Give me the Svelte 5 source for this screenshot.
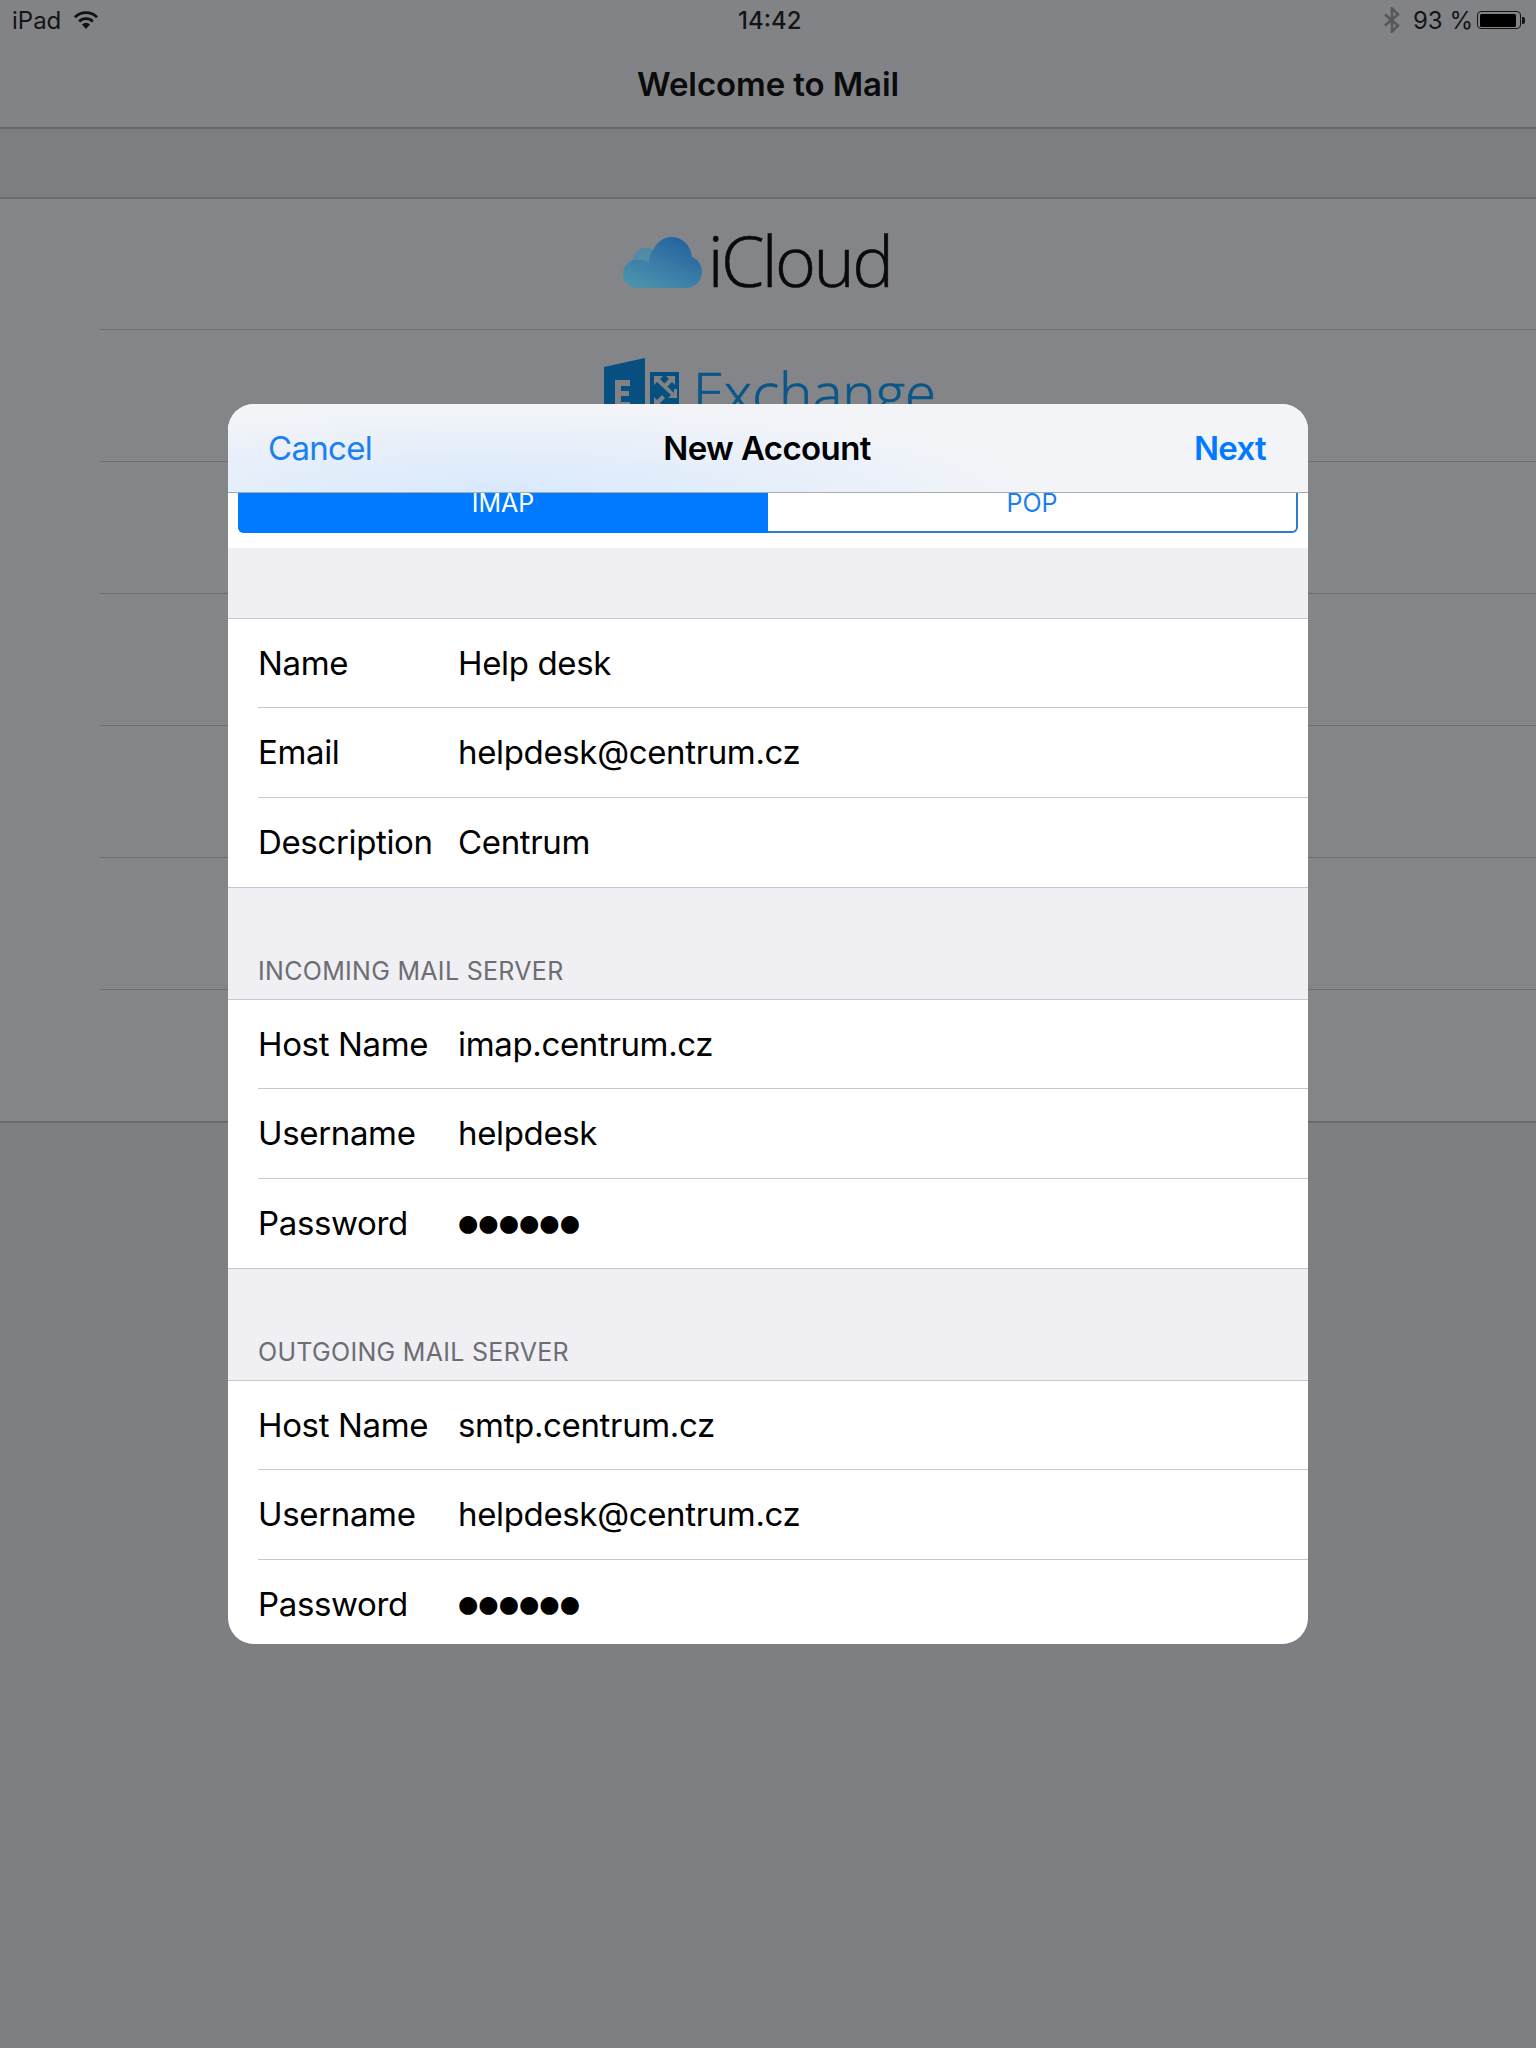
<script>
  const groups = [
    {
      title: "",
      rows: [
        { label: "Name", value: "Help desk" },
        { label: "Email", value: "helpdesk@centrum.cz" },
        { label: "Description", value: "Centrum" }
      ]
    },
    {
      title: "INCOMING MAIL SERVER",
      rows: [
        { label: "Host Name", value: "imap.centrum.cz" },
        { label: "Username", value: "helpdesk" },
        { label: "Password", value: "●●●●●●", secret: true }
      ]
    },
    {
      title: "OUTGOING MAIL SERVER",
      rows: [
        { label: "Host Name", value: "smtp.centrum.cz" },
        { label: "Username", value: "helpdesk@centrum.cz" },
        { label: "Password", value: "●●●●●●", secret: true }
      ]
    }
  ];
</script>

<div class="page">
  <header class="topbar">
    <div class="status">
      <div class="status-left">
        <span>iPad</span>
        <svg class="wifi" viewBox="0 0 24 18" width="24" height="18">
          <path d="M1 6.2a15.6 15.6 0 0 1 22 0" fill="none" stroke="#111" stroke-width="2.8" />
          <path d="M5.2 10.4a9.6 9.6 0 0 1 13.6 0" fill="none" stroke="#111" stroke-width="2.8" />
          <path d="M8 13.4a5.6 5.6 0 0 1 8 0L12 18z" fill="#111" />
        </svg>
      </div>
      <span class="clock">14:42</span>
      <div class="status-right">
        <svg class="bt" viewBox="0 0 16 26" width="16" height="26">
          <path d="M1 7.5 14 18.5 8 24.5V1.5l6 6L1 18.5" fill="none" stroke="#55565a" stroke-width="2.4" />
        </svg>
        <span>93 %</span>
        <div class="battery"><div class="battery-fill"></div></div>
        <div class="battery-tip"></div>
      </div>
    </div>
    <h1>Welcome to Mail</h1>
  </header>

  <div class="band"></div>

  <div class="providers">
    <div class="provider first">
      <svg class="cloud" viewBox="0 0 79 51" width="79" height="51">
        <defs>
          <linearGradient id="cloudfill" x1="0.9" y1="0" x2="0.2" y2="1">
            <stop offset="0" stop-color="#1f5f9c" />
            <stop offset="0.55" stop-color="#3a7ba8" />
            <stop offset="1" stop-color="#4b93ad" />
          </linearGradient>
        </defs>
        <path d="M15 51C6 51 0 45 0 37c0-7 4-12 10-14 1-7 7-13 14-12 2 0 4 1 6 2C34 5 41 0 48 0c11 0 20 8 21 20 6 2 10 8 10 15 0 9-7 16-16 16z" fill="url(#cloudfill)" />
        <path d="M10 23c1-7 7-12 14-12 2 0 4 1 6 2-3 4-4 9-4 13-5-3-11-4-16-3z" fill="#5a93a8" opacity="0.7" />
      </svg>
      <span class="icloud">iCloud</span>
    </div>
    <div class="provider exchange-row">
      <svg class="exchange-logo" viewBox="0 0 75 66" width="75" height="66">
        <path d="M0 9 41 0v66L0 57z" fill="#074f80" />
        <path d="M11 22h15v6H17v5h8v5h-8v6h9v6H11z" fill="#7f8185" />
        <path d="M46 14h29v38H46z" fill="#074f80" />
        <path d="M50 18h9l-3 3 14 14v-4l3 0v9h-9l3-3L53 24l-3 3zM71 18v9l-3-3-7 7-3-3 7-7-3-3zM50 48v-9l3 3 5-5 3 3-5 5 3 3z" fill="#7f8185" />
      </svg>
      <span class="exchange">Exchange</span>
    </div>
    <div class="provider"></div>
    <div class="provider"></div>
    <div class="provider"></div>
    <div class="provider"></div>
    <div class="provider last"></div>
  </div>

  <div class="modal">
    <nav class="modal-nav">
      <span class="cancel">Cancel</span>
      <span class="modal-title">New Account</span>
      <span class="next">Next</span>
    </nav>

    <div class="segment-wrap">
      <div class="segment">
        <div class="seg active">IMAP</div>
        <div class="seg">POP</div>
      </div>
    </div>

    {#each groups as group}
      <div class="group-head">{group.title}</div>
      <div class="group">
        {#each group.rows as row}
          <div class="row">
            <span class="label">{row.label}</span>
            <span class="value" class:secret={row.secret}>{row.value}</span>
          </div>
        {/each}
      </div>
    {/each}
  </div>
</div>

<style>
  :global(body) {
    margin: 0;
    background: #7e7f83;
  }

  .page {
    position: relative;
    width: 1536px;
    height: 2048px;
    overflow: hidden;
    background: #7e7f83;
    font-family: Inter, "Liberation Sans", sans-serif;
    color: #0b0b0c;
  }

  .topbar {
    height: 127px;
    background: #828387;
    border-bottom: 2px solid #66676a;
  }

  .status {
    display: flex;
    justify-content: space-between;
    align-items: center;
    height: 40px;
    padding: 0 11px 0 12px;
    font-size: 24px;
    color: #141415;
    position: relative;
  }

  .status-left {
    display: flex;
    align-items: center;
    gap: 13px;
  }

  .clock {
    position: absolute;
    left: 738px;
    font-weight: 500;
  }

  .status-right {
    display: flex;
    align-items: center;
  }

  .bt {
    margin-right: 13px;
  }

  .battery {
    width: 44px;
    height: 18px;
    box-sizing: border-box;
    border: 1.5px solid #141415;
    border-radius: 4px;
    padding: 1.5px;
    margin-left: 4px;
  }

  .battery-fill {
    height: 100%;
    width: 93%;
    background: #000;
    border-radius: 1.5px;
  }

  .battery-tip {
    width: 3px;
    height: 7px;
    background: #141415;
    border-radius: 0 2px 2px 0;
    margin-left: 1px;
  }

  h1 {
    margin: 0;
    text-align: center;
    font-size: 33px;
    font-weight: 600;
    letter-spacing: -0.1px;
    line-height: 88px;
    height: 87px;
  }

  .band {
    height: 68px;
    background: #7d7e82;
    border-bottom: 2px solid #6a6b6e;
  }

  .providers {
    background: #848589;
    border-bottom: 2px solid #6a6b6e;
  }

  .provider {
    height: 131px;
    margin-left: 100px;
    border-bottom: 1px solid #6d6e71;
    display: flex;
    justify-content: center;
    align-items: center;
    padding-right: 100px;
  }

  .provider.first {
    height: 130px;
    padding-right: 122px;
  }

  .provider.last {
    border-bottom: none;
  }

  .cloud {
    margin-top: -4px;
  }

  .icloud {
    font-family: "Open Sans", sans-serif;
    font-weight: 300;
    font-size: 70px;
    letter-spacing: -2.6px;
    margin: -8px 0 0 6px;
    color: #0a0a0b;
    -webkit-text-stroke: 0.6px #0a0a0b;
  }

  .exchange-row {
    overflow: hidden;
  }

  .exchange-logo {
    margin: -10px 0 0 4px;
  }

  .exchange {
    font-family: "Open Sans", sans-serif;
    font-weight: 300;
    font-size: 56.5px;
    color: #0a5688;
    -webkit-text-stroke: 0.7px #0a5688;
    margin: -6px 0 0 14px;
  }

  .modal {
    position: absolute;
    left: 228px;
    top: 404px;
    width: 1080px;
    height: 1240px;
    background: #fff;
    border-radius: 26px;
    overflow: hidden;
  }

  .modal-nav {
    height: 89px;
    box-sizing: border-box;
    border-bottom: 1px solid #a9aaad;
    display: grid;
    grid-template-columns: 1fr auto 1fr;
    align-items: center;
    padding: 0 42px 0 40px;
    font-size: 33px;
    background:
      radial-gradient(ellipse 540px 85px at 270px 100%, #d8e9fd, transparent),
      #f3f4f8;
  }

  .cancel {
    color: #1a7ff0;
    letter-spacing: -0.7px;
  }

  .modal-title {
    font-weight: 600;
    letter-spacing: -0.6px;
    color: #000;
  }

  .next {
    color: #007aff;
    font-weight: 600;
    letter-spacing: -0.7px;
    text-align: right;
  }

  .segment-wrap {
    height: 55px;
    padding: 0 10px;
  }

  .segment {
    display: flex;
    height: 40px;
    box-sizing: border-box;
    border: 2px solid #2a7cce;
    border-top: none;
    border-radius: 0 0 6px 6px;
    font-size: 25px;
  }

  .seg {
    flex: 1;
    text-align: center;
    line-height: 21px;
    color: #1a7ff0;
  }

  .seg.active {
    flex: 0 0 530px;
    background: #007aff;
    color: #fff;
    border-radius: 0 0 0 6px;
    margin: 0 0 -2px -2px;
  }

  .group-head {
    background: #efeff4;
    height: 70px;
    box-sizing: border-box;
    padding: 0 30px 13px;
    display: flex;
    align-items: flex-end;
    font-size: 25px;
    letter-spacing: 0.3px;
    color: #6d6d72;
  }

  .group-head:not(:nth-child(3)) {
    height: 111px;
  }

  .group {
    border-top: 1px solid #c8c7cc;
    border-bottom: 1px solid #c8c7cc;
  }

  .row {
    display: flex;
    align-items: center;
    box-sizing: border-box;
    height: 89.33px;
    padding-bottom: 1px;
    margin-left: 30px;
    font-size: 33px;
    letter-spacing: -0.35px;
    color: #000;
    border-bottom: 1px solid #c8c7cc;
  }

  .row:last-child {
    border-bottom: none;
  }

  .label {
    width: 200px;
  }

  .secret {
    font-family: "DejaVu Sans", sans-serif;
    font-size: 23.3px;
    letter-spacing: 0;
  }
</style>
